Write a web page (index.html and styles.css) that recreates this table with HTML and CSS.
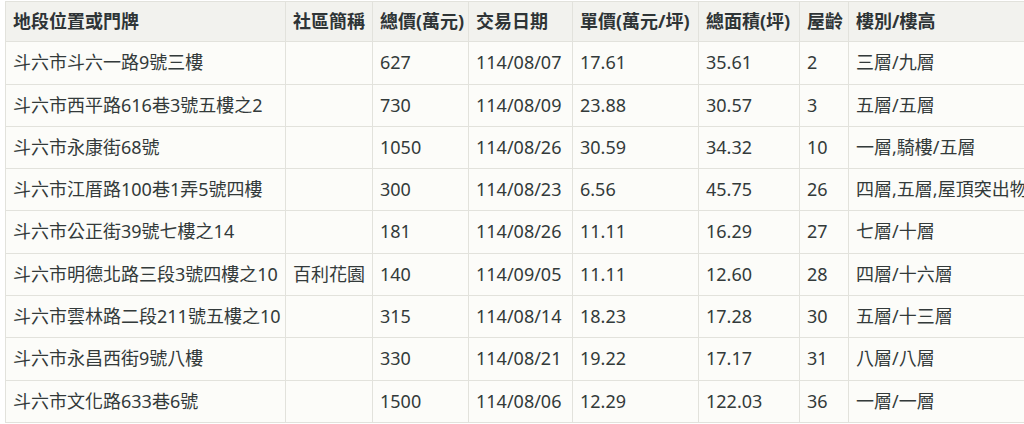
FILE: index.html
```html
<!DOCTYPE html>
<html lang="zh-Hant">
<head>
<meta charset="utf-8">
<link rel="stylesheet" href="styles.css">
</head>
<body>
<div class="wrap">
<table class="deals">
<colgroup>
<col class="c1"><col class="c2"><col class="c3"><col class="c4"><col class="c5"><col class="c6"><col class="c7"><col class="c8">
</colgroup>
<thead>
<tr><th>地段位置或門牌</th><th>社區簡稱</th><th>總價(萬元)</th><th>交易日期</th><th>單價(萬元/坪)</th><th>總面積(坪)</th><th>屋齡</th><th>樓別/樓高</th></tr>
</thead>
<tbody>
<tr><td>斗六市斗六一路9號三樓</td><td></td><td>627</td><td>114/08/07</td><td>17.61</td><td>35.61</td><td>2</td><td>三層/九層</td></tr>
<tr><td>斗六市西平路616巷3號五樓之2</td><td></td><td>730</td><td>114/08/09</td><td>23.88</td><td>30.57</td><td>3</td><td>五層/五層</td></tr>
<tr><td>斗六市永康街68號</td><td></td><td>1050</td><td>114/08/26</td><td>30.59</td><td>34.32</td><td>10</td><td>一層,騎樓/五層</td></tr>
<tr><td>斗六市江厝路100巷1弄5號四樓</td><td></td><td>300</td><td>114/08/23</td><td>6.56</td><td>45.75</td><td>26</td><td>四層,五層,屋頂突出物/五層</td></tr>
<tr><td>斗六市公正街39號七樓之14</td><td></td><td>181</td><td>114/08/26</td><td>11.11</td><td>16.29</td><td>27</td><td>七層/十層</td></tr>
<tr><td>斗六市明德北路三段3號四樓之10</td><td>百利花園</td><td>140</td><td>114/09/05</td><td>11.11</td><td>12.60</td><td>28</td><td>四層/十六層</td></tr>
<tr><td>斗六市雲林路二段211號五樓之10</td><td></td><td>315</td><td>114/08/14</td><td>18.23</td><td>17.28</td><td>30</td><td>五層/十三層</td></tr>
<tr><td>斗六市永昌西街9號八樓</td><td></td><td>330</td><td>114/08/21</td><td>19.22</td><td>17.17</td><td>31</td><td>八層/八層</td></tr>
<tr><td>斗六市文化路633巷6號</td><td></td><td>1500</td><td>114/08/06</td><td>12.29</td><td>122.03</td><td>36</td><td>一層/一層</td></tr>
</tbody>
</table>
</div>
</body>
</html>
```
FILE: styles.css
```css
html, body {
  margin: 0;
  padding: 0;
  background: #ffffff;
  overflow: hidden;
}
.wrap {
  padding: 1px 0 0 5px;
}
.deals {
  border-collapse: collapse;
  table-layout: fixed;
  width: 1063px;
  font-family: "Noto Sans", "Noto Sans CJK TC", sans-serif;
  font-size: 18px;
  color: #333a3a;
  background: #fcfcf9;
}
.c1 { width: 280px; }
.c2 { width: 87px; }
.c3 { width: 96px; }
.c4 { width: 104px; }
.c5 { width: 126px; }
.c6 { width: 101px; }
.c7 { width: 49px; }
.c8 { width: 220px; }
.deals th, .deals td {
  border: 1px solid #e2e2dc;
  padding: 8px 7px;
  height: 25.3px;
  line-height: 25.3px;
  text-align: left;
  white-space: nowrap;
  overflow: hidden;
}
.deals th {
  padding: 7px 7px;
  background: #f2f2ee;
  font-weight: bold;
  color: #2e3436;
}
```
